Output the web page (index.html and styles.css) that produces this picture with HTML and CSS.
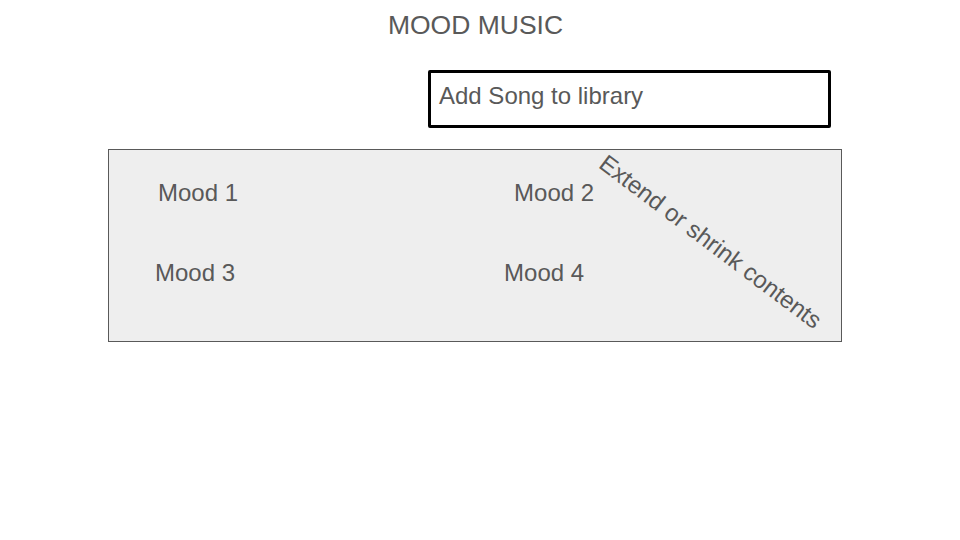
FILE: index.html
```html
<!DOCTYPE html>
<html>
<head>
<meta charset="utf-8">
<link rel="stylesheet" href="styles.css">
</head>
<body>
<div class="page">
  <h1 class="title">MOOD MUSIC</h1>
  <div class="add-row">
    <div class="add-box">Add Song to library</div>
  </div>
  <div class="panel">
    <div class="row row-1">
      <span class="mood">Mood 1</span>
      <span class="mood">Mood 2</span>
    </div>
    <div class="row row-2">
      <span class="mood">Mood 3</span>
      <span class="mood">Mood 4</span>
    </div>
    <div class="note">Extend or shrink contents</div>
  </div>
</div>
</body>
</html>
```

FILE: styles.css
```css
html, body {
  margin: 0;
  padding: 0;
  background: #ffffff;
}
body {
  font-family: "Liberation Sans", Arial, sans-serif;
  color: #595959;
  width: 960px;
  height: 540px;
  overflow: hidden;
}
.page {
  display: flex;
  flex-direction: column;
  padding-top: 10px;
}
.title {
  margin: 0;
  font-weight: normal;
  font-size: 26.5px;
  line-height: 30px;
  text-align: center;
  padding-right: 9px;
}
.add-row {
  display: flex;
  padding-left: 428px;
  margin-top: 30px;
}
.add-box {
  box-sizing: border-box;
  width: 403px;
  height: 58px;
  border: 3px solid #000000;
  border-radius: 2px;
  padding: 9px 8px 0 8px;
  font-size: 24px;
  line-height: 28px;
}
.panel {
  position: relative;
  box-sizing: border-box;
  margin-top: 21px;
  margin-left: 108px;
  width: 734px;
  height: 193px;
  background: #eeeeee;
  border: 1px solid #595959;
  padding-top: 29px;
  display: flex;
  flex-direction: column;
  gap: 52px;
}
.row {
  display: flex;
}
.row-1 {
  padding-left: 49px;
  gap: 276px;
}
.row-2 {
  padding-left: 46px;
  gap: 269px;
}
.mood {
  font-size: 24px;
  line-height: 28px;
}
.note {
  position: absolute;
  left: 601px;
  top: 92px;
  width: 271px;
  font-size: 24px;
  line-height: 28px;
  white-space: nowrap;
  transform-origin: 50% 50%;
  transform: translate(-135px, -14px) rotate(37deg);
}
```
